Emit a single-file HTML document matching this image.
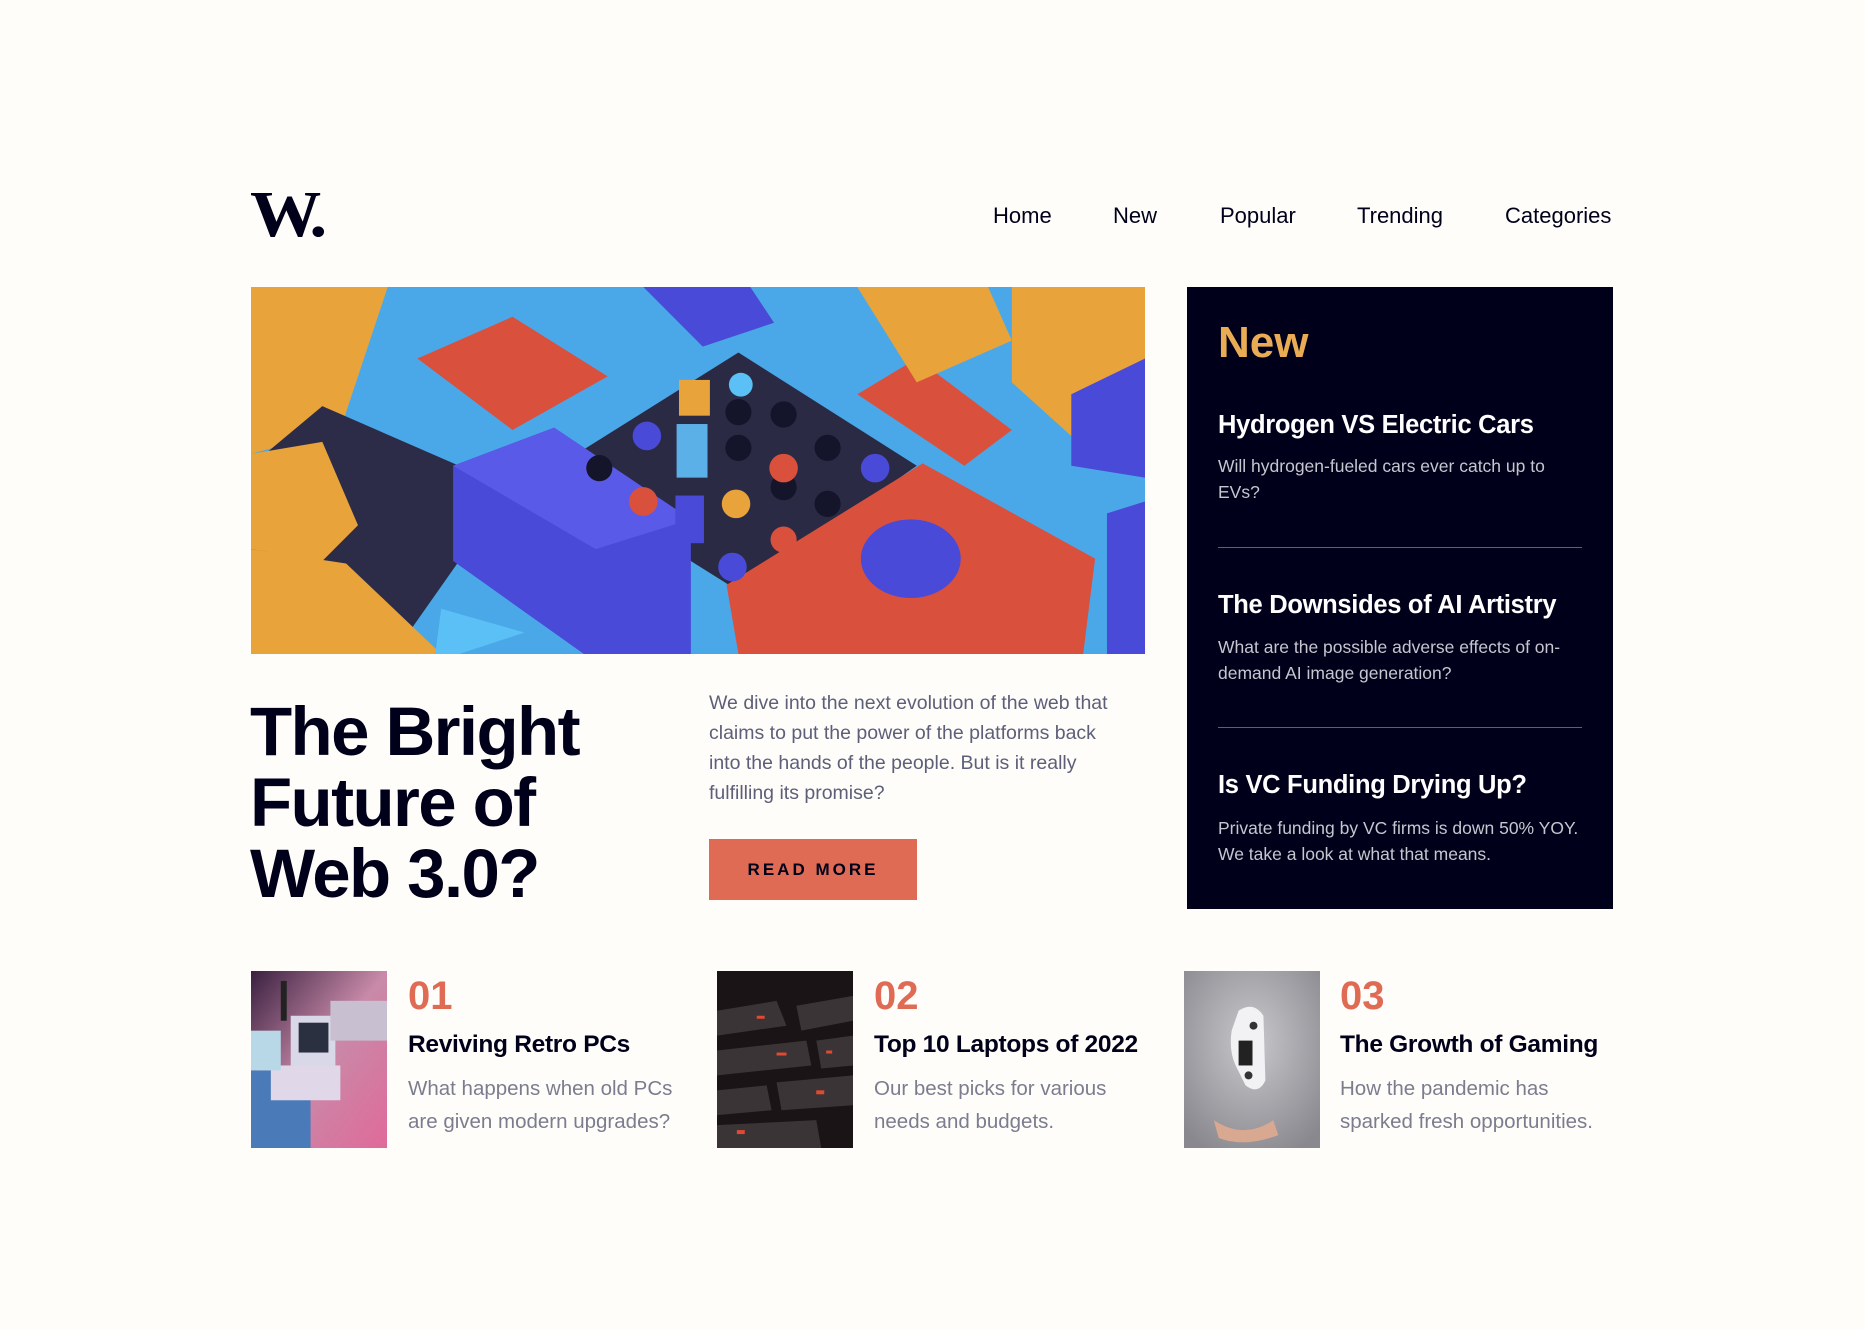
<!DOCTYPE html>
<html><head><meta charset="utf-8"><style>
*{margin:0;padding:0;box-sizing:border-box}
body{width:1865px;height:1330px;background:#fffdfa;font-family:"Liberation Sans",sans-serif;position:relative;overflow:hidden;color:#00001a}
.a{position:absolute}
.nav{top:203px;font-size:22px;color:#00001a}
.side{left:1187px;top:287px;width:426px;height:622px;background:#00001a}
.st{position:absolute;left:31px;color:#fff;font-weight:bold;font-size:25.5px;letter-spacing:-0.3px;white-space:nowrap}
.sd{position:absolute;left:31px;width:368px;color:#c5c6ce;font-size:17.5px;line-height:26px}
.hr{position:absolute;left:31px;width:364px;height:1px;background:#5d5f79}
.num{font-size:40px;font-weight:bold;color:#e06b55;top:974px}
.bt{font-size:24.5px;font-weight:bold;top:1031px;letter-spacing:-0.3px;white-space:nowrap}
.bd{font-size:20.5px;color:#7b7d8f;line-height:33px;top:1072px}
</style></head><body>
<div class="a" style="left:250px;top:182px;font-family:'Liberation Serif',serif;font-weight:900;font-size:66px;letter-spacing:-5px;line-height:66px;color:#00001a;transform:scaleX(1.08);transform-origin:left">W.</div>
<div class="a nav" style="left:993px">Home</div>
<div class="a nav" style="left:1113px">New</div>
<div class="a nav" style="left:1220px">Popular</div>
<div class="a nav" style="left:1357px">Trending</div>
<div class="a nav" style="left:1505px">Categories</div>

<svg class="a" style="left:251px;top:287px" width="894" height="367" viewBox="0 0 752 308" preserveAspectRatio="none">
<rect width="752" height="308" fill="#4aa8e8"/>
<polygon points="0,0 115,0 75,120 0,140" fill="#e8a43a"/>
<polygon points="60,100 175,150 175,230 120,308 0,308 0,150" fill="#2c2c48"/>
<polygon points="0,220 80,232 160,308 0,308" fill="#e8a43a"/>
<polygon points="0,140 60,130 90,200 60,230 0,220" fill="#e8a43a"/>
<polygon points="140,60 220,25 300,75 220,120" fill="#d9503d"/>
<polygon points="330,0 420,0 440,30 380,50" fill="#4a4ad8"/>
<polygon points="410,55 560,150 410,255 250,155" fill="#2a2a44"/>
<polygon points="170,150 255,118 370,195 370,308 280,308 170,230" fill="#4a4ad8"/>
<polygon points="170,150 255,118 370,195 290,220" fill="#5a5ae8"/>
<polygon points="400,250 565,148 710,228 700,308 410,308" fill="#d9503d"/>
<polygon points="510,90 560,60 640,120 600,150" fill="#d9503d"/>
<ellipse cx="555" cy="228" rx="42" ry="33" fill="#4a4ad8"/>
<polygon points="510,0 620,0 640,45 560,80" fill="#e8a43a"/>
<polygon points="640,0 752,0 752,95 690,125 640,80" fill="#e8a43a"/>
<polygon points="690,90 752,60 752,160 690,150" fill="#4a4ad8"/>
<polygon points="160,270 230,290 175,308 155,308" fill="#5bc0f5"/>
<polygon points="720,190 752,180 752,308 720,308" fill="#4a4ad8"/>
<g fill="#14142a"><circle cx="410" cy="105" r="11"/><circle cx="448" cy="107" r="11"/><circle cx="410" cy="135" r="11"/><circle cx="485" cy="135" r="11"/><circle cx="293" cy="152" r="11"/><circle cx="485" cy="182" r="11"/><circle cx="448" cy="168" r="11"/></g>
<g fill="#4a4ad8"><circle cx="333" cy="125" r="12"/><circle cx="525" cy="152" r="12"/><circle cx="405" cy="235" r="12"/><rect x="357" y="175" width="24" height="40"/></g>
<rect x="358" y="115" width="26" height="45" fill="#5bb0e8"/>
<rect x="360" y="78" width="26" height="30" fill="#e8a43a"/>
<g fill="#d9503d"><circle cx="448" cy="152" r="12"/><circle cx="330" cy="180" r="12"/><circle cx="448" cy="212" r="11"/></g>
<circle cx="408" cy="182" r="12" fill="#e8a43a"/>
<circle cx="412" cy="82" r="10" fill="#5bc0f5"/>
</svg>

<div class="a side">
<div class="a" style="left:31px;top:31px;color:#e9ab53;font-size:44px;font-weight:bold">New</div>
<div class="st" style="top:124px">Hydrogen VS Electric Cars</div>
<div class="sd" style="top:166px">Will hydrogen-fueled cars ever catch up to EVs?</div>
<div class="hr" style="top:260px"></div>
<div class="st" style="top:304px">The Downsides of AI Artistry</div>
<div class="sd" style="top:347px">What are the possible adverse effects of on-demand AI image generation?</div>
<div class="hr" style="top:440px"></div>
<div class="st" style="top:484px">Is VC Funding Drying Up?</div>
<div class="sd" style="top:528px">Private funding by VC firms is down 50% YOY. We take a look at what that means.</div>
</div>

<div class="a" style="left:250px;top:696px;font-size:69px;font-weight:bold;line-height:71px;letter-spacing:-1.6px;color:#00001a">The Bright<br>Future of<br>Web 3.0?</div>
<div class="a" style="left:709px;top:688px;width:412px;font-size:19.5px;line-height:30px;color:#5d5f79">We dive into the next evolution of the web that claims to put the power of the platforms back into the hands of the people. But is it really fulfilling its promise?</div>
<div class="a" style="left:709px;top:839px;width:208px;height:61px;background:#e06b55;color:#00001a;font-weight:bold;font-size:17px;letter-spacing:3px;text-align:center;line-height:61px">READ MORE</div>

<svg class="a" style="left:251px;top:971px" width="136" height="177" viewBox="0 0 137 178" preserveAspectRatio="none"><defs><linearGradient id="g1" x1="0" y1="0" x2="1" y2="1"><stop offset="0" stop-color="#3a2040"/><stop offset=".5" stop-color="#c88aa8"/><stop offset="1" stop-color="#e06a9a"/></linearGradient></defs><rect width="137" height="178" fill="url(#g1)"/><rect x="0" y="100" width="60" height="78" fill="#4a7ab8"/><rect x="40" y="45" width="45" height="50" fill="#d8d8e8"/><rect x="48" y="52" width="30" height="30" fill="#2a3040"/><rect x="80" y="30" width="57" height="40" fill="#c8c0d0"/><rect x="20" y="95" width="70" height="35" fill="#e0d8e8"/><rect x="0" y="60" width="30" height="40" fill="#b8d8e8"/><rect x="30" y="10" width="6" height="40" fill="#222"/></svg>
<div class="a num" style="left:408px">01</div>
<div class="a bt" style="left:408px">Reviving Retro PCs</div>
<div class="a bd" style="left:408px">What happens when old PCs<br>are given modern upgrades?</div>

<svg class="a" style="left:717px;top:971px" width="136" height="177" viewBox="0 0 137 178" preserveAspectRatio="none"><rect width="137" height="178" fill="#1a1416"/><g fill="#3a3436"><polygon points="0,40 60,30 70,55 0,65"/><polygon points="80,35 137,25 137,50 85,60"/><polygon points="0,80 90,70 95,95 0,105"/><polygon points="100,70 137,65 137,95 105,98"/><polygon points="0,120 50,115 55,140 0,145"/><polygon points="60,112 137,105 137,135 65,140"/><polygon points="0,155 100,150 105,178 0,178"/></g><g fill="#e04a30"><rect x="40" y="45" width="8" height="3"/><rect x="60" y="82" width="10" height="3"/><rect x="100" y="120" width="8" height="4"/><rect x="20" y="160" width="8" height="4"/><rect x="110" y="80" width="6" height="3"/></g></svg>
<div class="a num" style="left:874px">02</div>
<div class="a bt" style="left:874px">Top 10 Laptops of 2022</div>
<div class="a bd" style="left:874px">Our best picks for various<br>needs and budgets.</div>

<svg class="a" style="left:1184px;top:971px" width="136" height="177" viewBox="0 0 137 178" preserveAspectRatio="none"><defs><radialGradient id="g3" cx=".5" cy=".4" r=".7"><stop offset="0" stop-color="#c8c8cc"/><stop offset="1" stop-color="#88888e"/></radialGradient></defs><rect width="137" height="178" fill="url(#g3)"/><path d="M55 40 Q70 30 80 45 L82 110 Q75 125 62 115 L52 95 Q45 80 48 60Z" fill="#f2f2f4"/><rect x="55" y="70" width="14" height="25" fill="#222"/><circle cx="70" cy="55" r="4" fill="#333"/><circle cx="65" cy="105" r="4" fill="#333"/><path d="M30 150 Q60 170 90 150 L95 165 Q60 178 35 168Z" fill="#d8a890"/></svg>
<div class="a num" style="left:1340px">03</div>
<div class="a bt" style="left:1340px">The Growth of Gaming</div>
<div class="a bd" style="left:1340px">How the pandemic has<br>sparked fresh opportunities.</div>
</body></html>
